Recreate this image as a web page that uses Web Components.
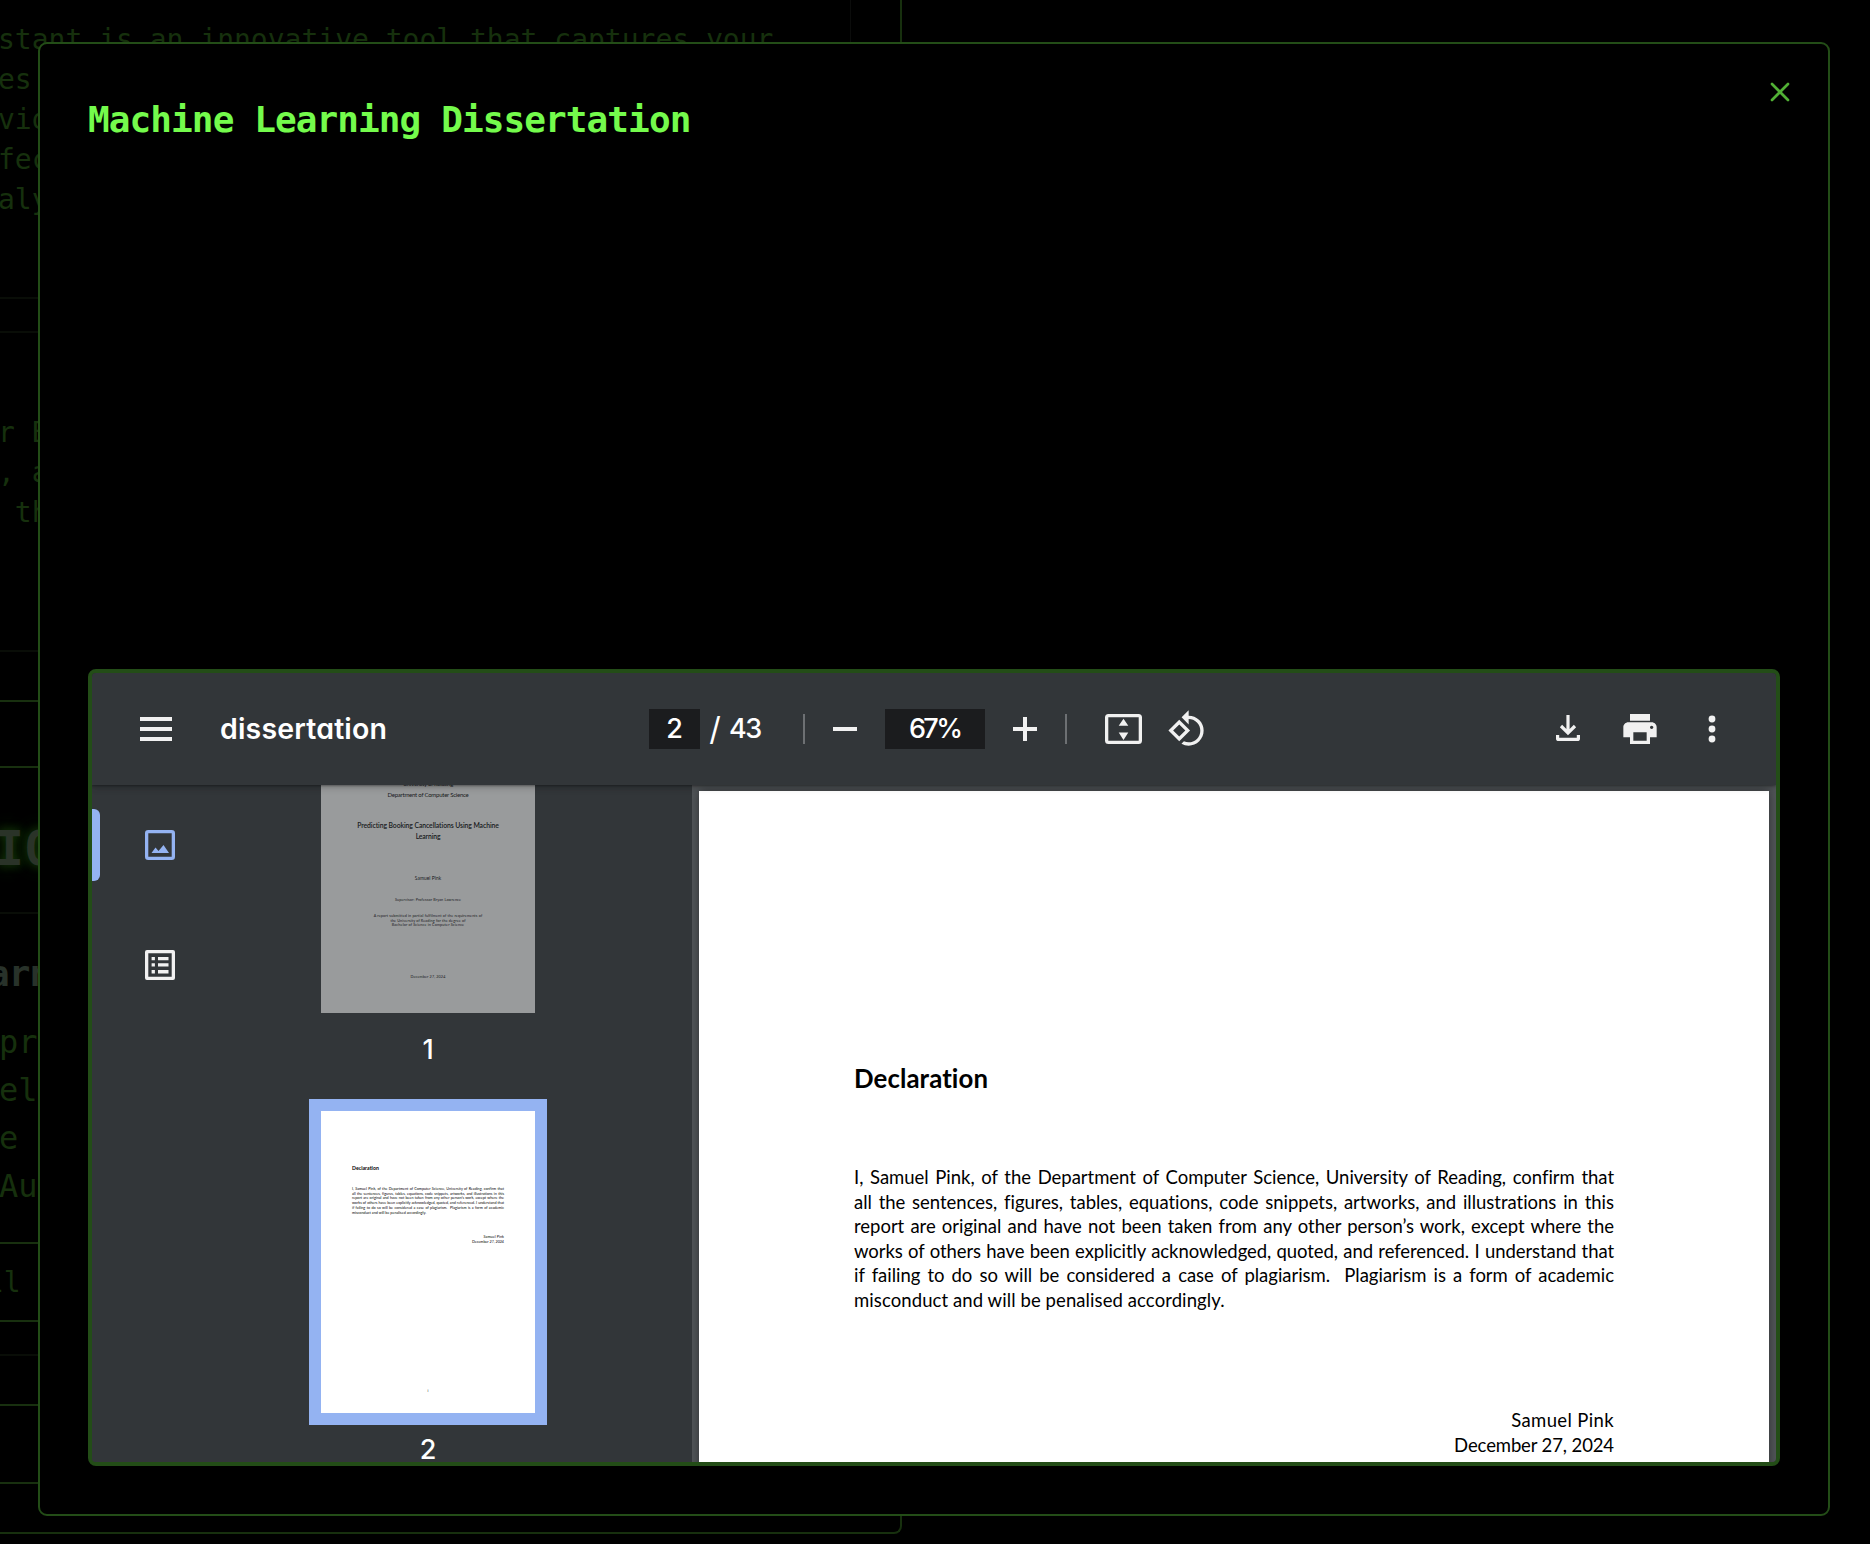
<!DOCTYPE html>
<html lang="en">
<head>
<meta charset="utf-8">
<title>Machine Learning Dissertation</title>
<style>
html, body { margin: 0; background: #000; }
body { width: 1870px; height: 1544px; overflow: hidden; font-family: "DejaVu Sans Mono", monospace; }
</style>
</head>
<body>
<portfolio-app></portfolio-app>

<script>
const define = (name, html, setup) => {
  const tpl = document.createElement('template');
  tpl.innerHTML = html;
  customElements.define(name, class extends HTMLElement {
    connectedCallback() {
      if (this.shadowRoot) return;
      this.attachShadow({ mode: 'open' }).append(tpl.content.cloneNode(true));
      if (setup) setup(this);
    }
  });
};

define('portfolio-app', `
<style>
:host { display: block; position: relative; width: 1870px; height: 1544px; overflow: hidden; background: #000; }
app-dialog { position: absolute; left: 38px; top: 42px; z-index: 2; }
</style>
<project-list></project-list>
<app-dialog>
  <span slot="title">Machine Learning Dissertation</span>
  <pdf-viewer></pdf-viewer>
</app-dialog>`);

/* Dimmed page behind the dialog */
define('project-list', `
<style>
:host { display: block; height: 1534px; width: 902px; box-sizing: border-box; border: 2px solid #17300e; border-top: 0; border-left: 0;
  border-radius: 0 0 8px 0; color: #16300d; font-size: 28px; line-height: 40px; overflow: hidden; }
.panel { width: 851px; height: 297px; box-sizing: border-box; border-right: 1px solid #0b0c0b; padding-top: 20px; }
p { margin: 0 0 0 -2px; white-space: pre; }
hr { margin: 0; border: 0; height: 2px; background: #090d07; }
hr.g { background: #18300f; }
h2 { margin: 0 0 0 -5px; font-size: 48px; line-height: 56px; letter-spacing: 1.2px; color: #2a3328; white-space: pre;
  text-shadow: 0 0 10px #143a08, 0 0 20px #0f2a06; }
h3 { margin: 0 0 0 -12px; font-size: 36px; line-height: 44px; letter-spacing: -.9px; color: #28322a; }
.big { font-size: 32px; line-height: 48px; margin-left: 0; }
</style>
<div class="panel"><p>stant is an innovative tool that captures your
es
vid
fec
aly</p></div>
<hr><hr style="margin-top:32px">
<p style="margin-top:80px">r B
, a
 th</p>
<hr style="margin-top:117px">
<hr class="g" style="margin-top:48px">
<hr class="g" style="margin-top:64px">
<h2 style="margin-top:52px">IO</h2>
<hr style="margin-top:36px">
<h3 style="margin-top:38px">arn</h3>
<p class="big" style="margin:22px 0 0 -1px">pr
el
e
Au</p>
<hr class="g" style="margin-top:32px">
<p style="margin:19px 0 0 -13px">ll</p>
<hr class="g" style="margin-top:17px">
<hr style="margin-top:32px">
<hr class="g" style="margin-top:48px">
<hr class="g" style="margin-top:76px">`);

define('app-dialog', `
<style>
:host { display: flex; flex-direction: column; justify-content: space-between; box-sizing: border-box; width: 1792px; height: 1474px;
  padding: 48px; border: 2px solid #234d17; border-radius: 9px; background: #000; }
h1 { margin: 10px 0 0; font-size: 36px; line-height: 36px; letter-spacing: -.9px; color: #74fb4c; font-weight: 700; }
svg { position: absolute; right: 32px; top: 32px; }
</style>
<h1><slot name="title"></slot></h1>
<svg width="32" height="32" viewBox="0 0 24 24" fill="none" stroke="#51b035" stroke-width="2" stroke-linecap="round"><path d="M18 6 6 18M6 6l12 12"/></svg>
<slot></slot>`);

define('pdf-viewer', `
<style>
:host { display: flex; flex-direction: column; box-sizing: border-box; width: 1692px; height: 797px; border: 4px solid #234d17;
  border-radius: 8px; overflow: hidden; background: #323639; font-family: Inter, sans-serif; font-weight: 500; }
.body { display: flex; flex: 1; min-height: 0; overflow: hidden; }
.view { width: 1084px; box-sizing: border-box; padding: 6px 7px 0; background: #525659; overflow: hidden; }
.view pdf-page { box-shadow: 0 0 10px rgba(0,0,0,.45); }
</style>
<pdf-toolbar></pdf-toolbar>
<div class="body">
  <pdf-sidebar></pdf-sidebar>
  <div class="view"><pdf-page><declaration-text></declaration-text></pdf-page></div>
</div>`);

define('pdf-toolbar', `
<style>
:host { display: flex; align-items: center; flex: none; height: 112px; box-sizing: border-box; padding: 0 44px 0 48px; background: #323639; color: #fff;
  position: relative; z-index: 1; font-size: 27px; line-height: 40px;
  box-shadow: 0 -2px 8px rgba(0,0,0,.09), 0 4px 8px rgba(0,0,0,.06), 0 1px 2px rgba(0,0,0,.3), 0 2px 6px rgba(0,0,0,.15); }
svg { display: block; fill: #f1f1f1; flex: none; }
.left { display: flex; align-items: center; width: 509px; gap: 48px; font-size: 28.5px; }
.left fit-text { font-feature-settings: "cv11"; font-weight: 600; }
.box { height: 40px; background: #1b1c1e; display: flex; justify-content: center; }
.sep { width: 2px; height: 30px; background: #6d7073; }
.right { display: flex; gap: 32px; margin-left: auto; }
</style>
<div class="left">
  <svg width="32" height="24"><path d="M0 0h32v4H0zM0 10h32v4H0zM0 20h32v4H0z"/></svg>
  <fit-text w="167">dissertation</fit-text>
</div>
<div class="box" style="width:51px">2</div>
<span style="margin-left:9px;width:12px;display:flex;justify-content:center;font-size:32px;font-weight:400">/</span>
<fit-text w="32" style="margin-left:8px">43</fit-text>
<div class="sep" style="margin-left:42px"></div>
<svg width="24" height="24" style="margin-left:28px"><path d="M0 10h24v4H0z"/></svg>
<div class="box" style="width:100px;margin-left:28px"><fit-text w="51">67%</fit-text></div>
<svg width="24" height="24" style="margin-left:28px"><path d="M0 10h10V0h4v10h10v4H14v10h-4V14H0z"/></svg>
<div class="sep" style="margin-left:28px"></div>
<svg width="37" height="30" style="margin-left:38px"><path fill-rule="evenodd" d="M3.500 0h30A3.500 3.500 0 0 1 37 3.500v23a3.500 3.500 0 0 1-3.500 3.500h-30A3.500 3.500 0 0 1 0 26.500v-23A3.500 3.500 0 0 1 3.500 0zM3.300 3.300v23.400h30.400V3.300zM18.500 4.700l4.800 7h-9.600zM18.500 26l4.800-7.500h-9.600z"/></svg>
<svg width="40" height="40" viewBox="0 0 24 24" style="margin-left:25px"><path d="M7.34 6.41L.86 12.9l6.49 6.48 6.49-6.48-6.5-6.49zM3.69 12.9l3.66-3.66L11 12.9l-3.66 3.66-3.65-3.66zm15.67-6.26C17.61 4.88 15.3 4 13 4V.76L8.760 5 13 9.240V6c1.790 0 3.580.680 4.950 2.050 2.730 2.730 2.730 7.170 0 9.900C16.580 19.320 14.790 20 13 20c-.970 0-1.940-.210-2.840-.610l-1.490 1.490C10.020 21.620 11.510 22 13 22c2.300 0 4.610-.880 6.360-2.640 3.520-3.510 3.520-9.210 0-12.720z"/></svg>
<div class="right">
  <svg width="40" height="40" style="fill:none;stroke:#f1f1f1;stroke-width:3.200"><path d="M20 6v18M13 17l7 7 7-7"/><path d="M9.600 26v3.400a1 1 0 0 0 1 1h18.800a1 1 0 0 0 1-1V26"/></svg>
  <svg width="40" height="40" viewBox="0 0 24 24"><path d="M19 8H5c-1.660 0-3 1.340-3 3v6h4v4h12v-4h4v-6c0-1.660-1.340-3-3-3zm-3 11H8v-5h8v5zm3-7c-.550 0-1-.450-1-1s.450-1 1-1 1 .450 1 1-.450 1-1 1zm-1-9H6v4h12V3z"/></svg>
  <svg width="40" height="40"><circle cx="20" cy="10" r="3.400"/><circle cx="20" cy="20" r="3.400"/><circle cx="20" cy="30" r="3.400"/></svg>
</div>`);

define('pdf-sidebar', `
<style>
:host { display: flex; width: 600px; flex: none; background: #323639; color: #fff; overflow: hidden; font-size: 27px; line-height: 40px; }
nav { width: 136px; padding-top: 24px; display: flex; flex-direction: column; gap: 48px; }
nav div { height: 72px; display: flex; align-items: center; justify-content: center; }
nav .on { justify-content: flex-start; gap: 45px; }
.on::before { content: ""; width: 8px; height: 72px; border-radius: 0 6px 6px 0; background: #94b3f2; }
svg { display: block; }
.thumbs { width: 400px; margin-top: -86px; display: flex; flex-direction: column; align-items: center; }
.label { margin-top: 5px; margin-bottom: 29px; text-align: center; }
</style>
<nav>
  <div class="on"><svg width="30" height="30" fill="#94b3f2"><path fill-rule="evenodd" d="M3.300 0h23.400A3.300 3.300 0 0 1 30 3.300v23.400a3.300 3.300 0 0 1-3.300 3.300H3.300A3.300 3.300 0 0 1 0 26.700V3.300A3.300 3.300 0 0 1 3.300 0zM3.300 3.300v23.400h23.400V3.300zM6.500 23l4-5.500 3 3.500 5-6 5.500 8z"/></svg></div>
  <div><svg width="30" height="30" fill="#f1f1f1"><path fill-rule="evenodd" d="M2 0h26a2 2 0 0 1 2 2v26a2 2 0 0 1-2 2H2a2 2 0 0 1-2-2V2a2 2 0 0 1 2-2zM3.300 3.300v23.400h23.400V3.300zM6.600 6.900h3.300v3.300H6.600zM13 6.900h10.500v3.300H13zM6.600 13.300h3.300v3.300H6.600zM13 13.300h10.500v3.300H13zM6.600 20.100h3.300v3.300H6.600zM13 20.100h10.500v3.300H13z"/></svg></div>
</nav>
<div class="thumbs">
  <page-thumb dim><cover-text></cover-text></page-thumb>
  <div class="label">1</div>
  <page-thumb active><declaration-text></declaration-text></page-thumb>
  <div class="label">2</div>
</div>`);

define('page-thumb', `
<style>
:host { display: block; flex: none; width: 214px; height: 302px; border: 12px solid transparent; overflow: hidden; }
:host([active]) { border-color: #94b3f2; }
:host([dim]) pdf-page { opacity: .5; }
pdf-page { transform: scale(.2); transform-origin: 0 0; }
</style>
<pdf-page><slot></slot></pdf-page>`);

define('pdf-page', `
<style>
:host { display: block; width: 1070px; height: 1513px; background: #fff; color: #000; font-family: Lato, sans-serif; font-weight: 400; font-variant-ligatures: none; }
</style><slot></slot>`);

define('declaration-text', `
<style>
:host { display: flex; flex-direction: column; box-sizing: border-box; height: 1513px; padding: 267px 155px 0; font-size: 18.500px; line-height: 24.500px; }
h2 { margin: 0 0 67.200px; font-size: 25.800px; line-height: 40px; }
.l { text-align: justify; text-align-last: justify; white-space: nowrap; letter-spacing: -.02px; }
.r { text-align: right; }
</style>
<h2><fit-text w="134">Declaration</fit-text></h2>
<div class="l">I, Samuel Pink, of the Department of Computer Science, University of Reading, confirm that</div>
<div class="l">all the sentences, figures, tables, equations, code snippets, artworks, and illustrations in this</div>
<div class="l">report are original and have not been taken from any other person’s work, except where the</div>
<div class="l" style="letter-spacing:-.07px">works of others have been explicitly acknowledged, quoted, and referenced. I understand that</div>
<div class="l">if failing to do so will be considered a case of plagiarism. &nbsp;Plagiarism is a form of academic</div>
<div><fit-text w="371">misconduct and will be penalised accordingly.</fit-text></div>
<div class="r" style="margin-top:96px"><fit-text w="103">Samuel Pink</fit-text></div>
<div class="r"><fit-text w="160">December 27, 2024</fit-text></div>
<div style="text-align:center;margin-top:720px">i</div>`);

define('cover-text', `
<style>
:host { display: flex; flex-direction: column; align-items: center; box-sizing: border-box; height: 1513px; padding-top: 337px; font-size: 18.600px; line-height: 24px; color: #000; }
.m { font-size: 30px; line-height: 54px; }
.t { font-size: 34px; line-height: 56px; font-weight: 600; }
</style>
<fit-text class="m" w="250">University of Reading</fit-text>
<fit-text class="m" w="405">Department of Computer Science</fit-text>
<fit-text class="t" w="708" style="margin-top:97px">Predicting Booking Cancellations Using Machine</fit-text>
<fit-text class="t" w="124">Learning</fit-text>
<fit-text w="132" style="margin-top:168px;font-size:24px">Samuel Pink</fit-text>
<fit-text w="330" style="margin-top:83px">Supervisor: Professor Bryan Lawrence</fit-text>
<fit-text w="543" style="margin-top:57px">A report submitted in partial fulfilment of the requirements of</fit-text>
<fit-text w="376">the University of Reading for the degree of</fit-text>
<fit-text w="362">Bachelor of Science in Computer Science</fit-text>
<fit-text w="175" style="margin-top:235px">December 27, 2024</fit-text>`);

/* Tracks its text so that the run takes the width given in "w" */
define('fit-text', `<style>:host { display: inline-block; white-space: nowrap; flex: none; }</style><slot></slot>`, el => {
  const want = +el.getAttribute('w');
  const n = el.textContent.length;
  el.style.letterSpacing = ((want - el.offsetWidth) / n).toFixed(3) + 'px';
});
</script>
</body>
</html>
